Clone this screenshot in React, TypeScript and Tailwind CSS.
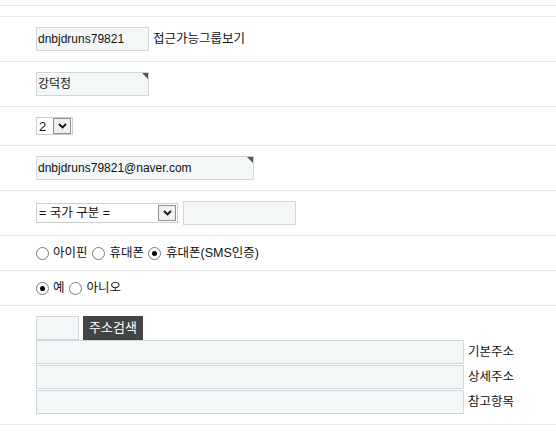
import React from "react";

const font = { fontFamily: '"Liberation Sans", "Noto Sans CJK KR", sans-serif' };

function Chevron() {
  return (
    <svg width="9" height="6" viewBox="0 0 9 6">
      <path d="M1 1 L4.5 4.5 L8 1" stroke="#111" strokeWidth="1.8" fill="none" />
    </svg>
  );
}

function DropBtn() {
  return (
    <span className="flex h-[16px] w-[18px] items-center justify-center border border-[#8a9094] bg-[#f0f0f0]">
      <Chevron />
    </span>
  );
}

function Radio({ checked }: { checked?: boolean }) {
  return (
    <span className="flex h-[13px] w-[13px] shrink-0 items-center justify-center rounded-full border border-[#7a7a7a] bg-white">
      {checked && <span className="h-[5px] w-[5px] rounded-full bg-black" />}
    </span>
  );
}

function Corner() {
  return (
    <span className="absolute right-0 top-0 h-0 w-0 border-l-[6px] border-t-[6px] border-l-transparent border-t-[#555]" />
  );
}

const inputCls =
  "relative flex h-[24px] items-center border border-[#cfd7da] bg-[#f4f7f8] pl-[1px] text-[12px] text-[#111]";

export default function App() {
  return (
    <div className="w-[556px] bg-white text-[12.5px] text-[#111]" style={font}>
      <div className="h-[5px]" />
      <div className="h-[11px] border-t border-[#e6e6e6]" />
      {/* row: id */}
      <div className="flex items-center border-t border-[#e6e6e6] py-[10px] pl-[36px]">
        <div className={inputCls + " w-[113px]"}>dnbjdruns79821</div>
        <span className="ml-[4px]">접근가능그룹보기</span>
      </div>
      {/* row: name */}
      <div className="flex items-center border-t border-[#e6e6e6] py-[10px] pl-[36px]">
        <div className={inputCls + " w-[113px] text-[12.5px]"}>
          강덕정
          <Corner />
        </div>
      </div>
      {/* row: select 2 */}
      <div className="flex items-center border-t border-[#e6e6e6] py-[10px] pl-[36px]">
        <div className="flex h-[18px] w-[37px] items-center justify-between border border-[#c9ced1] bg-white pl-[2px] pr-[1px]">
          <span className="text-[13px] leading-none">2</span>
          <DropBtn />
        </div>
      </div>
      {/* row: email */}
      <div className="flex items-center border-t border-[#e6e6e6] py-[10px] pl-[36px]">
        <div className={inputCls + " w-[218px]"}>
          dnbjdruns79821@naver.com
          <Corner />
        </div>
      </div>
      {/* row: country */}
      <div className="flex items-center border-t border-[#e6e6e6] pb-[10px] pt-[10px] pl-[36px]">
        <div className="flex h-[20px] w-[142px] items-center justify-between border border-[#c9ced1] bg-white pl-[2px] pr-[1px]">
          <span>= 국가 구분 =</span>
          <DropBtn />
        </div>
        <div className="ml-[5px] h-[24px] w-[113px] border border-[#cfd7da] bg-[#f4f7f8]" />
      </div>
      {/* row: auth radios */}
      <div className="flex h-[35px] items-center border-t border-[#e6e6e6] pl-[36px]">
        <Radio />
        <span className="ml-[4px] mr-[4px]">아이핀</span>
        <Radio />
        <span className="ml-[5px] mr-[4px]">휴대폰</span>
        <Radio checked />
        <span className="ml-[5px]">휴대폰(SMS인증)</span>
      </div>
      {/* row: yes/no */}
      <div className="flex h-[35px] items-center border-t border-[#e6e6e6] pl-[36px]">
        <Radio checked />
        <span className="ml-[4px] mr-[4px]">예</span>
        <Radio />
        <span className="ml-[5px]">아니오</span>
      </div>
      {/* row: address */}
      <div className="flex flex-col border-b border-t border-[#e6e6e6] pb-[10px] pt-[10px] pl-[36px]">
        <div className="flex items-center">
          <div className="h-[24px] w-[43px] border border-[#cfd7da] bg-[#f4f7f8]" />
          <span className="ml-[4px] flex h-[24px] w-[60px] items-center justify-center bg-[#444444] text-[13px] text-white">
            주소검색
          </span>
        </div>
        <div className="flex flex-col gap-[1px]">
          {["기본주소", "상세주소", "참고항목"].map((l) => (
            <div key={l} className="flex items-center">
              <div className="h-[24px] w-[428px] border border-[#cfd7da] bg-[#f4f7f8]" />
              <span className="ml-[4px]">{l}</span>
            </div>
          ))}
        </div>
      </div>
    </div>
  );
}
